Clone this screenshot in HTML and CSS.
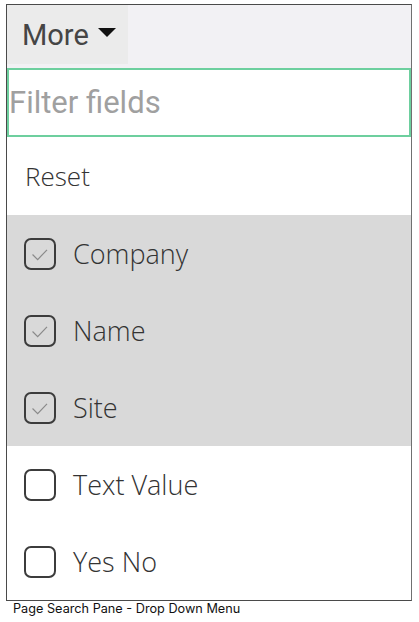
FILE: index.html
```html
<!DOCTYPE html>
<html>
<head>
<meta charset="utf-8">
<link rel="stylesheet" href="styles.css">
</head>
<body>
<div class="pane">
  <div class="header">
    <div class="more">More <span class="caret"></span></div>
  </div>
  <div class="filter"><span class="placeholder">Filter fields</span></div>
  <div class="row reset">Reset</div>
  <div class="row checked"><span class="box"><svg viewBox="0 0 30 30" width="30" height="30"><path d="M7 15.5 L12.5 21 L22.5 10.5" fill="none" stroke="#8a8a8a" stroke-width="1.3"/></svg></span>Company</div>
  <div class="row checked"><span class="box"><svg viewBox="0 0 30 30" width="30" height="30"><path d="M7 15.5 L12.5 21 L22.5 10.5" fill="none" stroke="#8a8a8a" stroke-width="1.3"/></svg></span>Name</div>
  <div class="row checked"><span class="box"><svg viewBox="0 0 30 30" width="30" height="30"><path d="M7 15.5 L12.5 21 L22.5 10.5" fill="none" stroke="#8a8a8a" stroke-width="1.3"/></svg></span>Site</div>
  <div class="row"><span class="box"></span>Text Value</div>
  <div class="row"><span class="box"></span>Yes No</div>
</div>
<div class="caption">Page Search Pane - Drop Down Menu</div>
</body>
</html>
```
FILE: styles.css
```css
html, body { margin: 0; padding: 0; background: #fff; }
.pane {
  margin: 4px 0 0 6px;
  width: 404px;
  border: 1px solid #4a4a4a;
  border-right-color: #707070;
  display: flex;
  flex-direction: column;
}
.header {
  height: 63px;
  background: #f2f1f4;
  display: flex;
}
.more {
  width: 121px;
  height: 59px;
  background: #ebebeb;
  display: flex;
  align-items: center;
  padding-left: 15px;
  box-sizing: border-box;
  font-family: Roboto, "Liberation Sans", sans-serif;
  font-size: 29px;
  color: #454545;
}
.caret {
  display: inline-block;
  width: 0; height: 0;
  border-left: 9px solid transparent;
  border-right: 9px solid transparent;
  border-top: 9px solid #111;
  margin-left: 9px;
  margin-top: -4px;
}
.filter {
  height: 69px;
  border: 2px solid #6dcf9e;
  box-sizing: border-box;
  display: flex;
  align-items: center;
  padding-left: 0;
  font-family: Roboto, "Liberation Sans", sans-serif;
  font-size: 31px;
  color: #a0a0a0;
}
.row {
  height: 77px;
  display: flex;
  align-items: center;
  font-family: "Open Sans", "Noto Sans", sans-serif;
  font-weight: 350;
  font-size: 27px;
  color: #333;
  padding-left: 17px;
}
.reset { height: 78px; padding-left: 18px; font-size: 26px; }
.checked { background: #d9d9d9; }
.box {
  width: 32px; height: 32px;
  border: 2px solid #3c3c3c;
  border-radius: 7px;
  box-sizing: border-box;
  margin-right: 17px;
  display: flex;
  align-items: center;
  justify-content: center;
}
.box svg { display: block; }
.caption {
  font-family: Inter, "Liberation Sans", sans-serif;
  font-size: 12.7px;
  color: #111;
  padding: 0 0 0 13px;
}
```
